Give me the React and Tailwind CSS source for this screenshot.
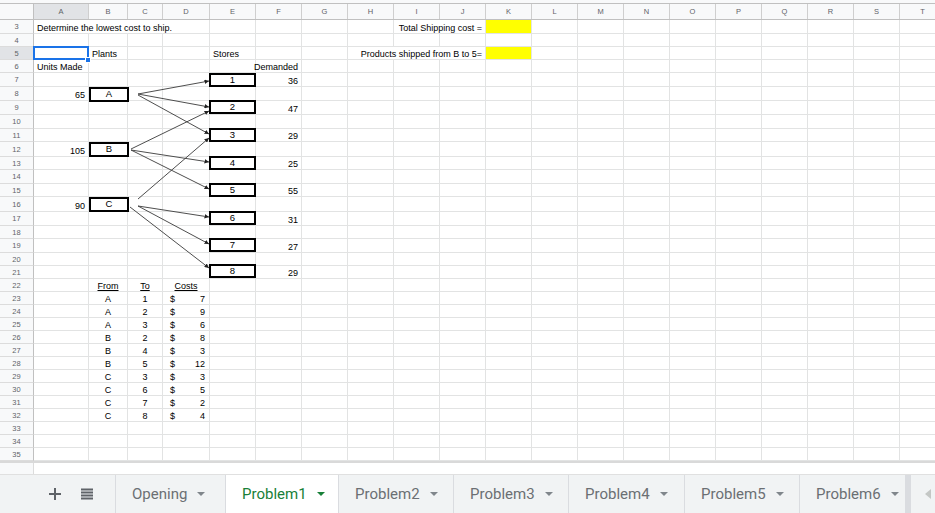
const COLS = [
  ['A', 55], ['B', 39], ['C', 35], ['D', 47], ['E', 46], ['F', 46], ['G', 46], ['H', 46],
  ['I', 46], ['J', 46], ['K', 46], ['L', 46], ['M', 46], ['N', 46], ['O', 46], ['P', 46],
  ['Q', 46], ['R', 46], ['S', 46], ['T', 46],
]

const W = { 55: 'w-[55px]', 39: 'w-[39px]', 35: 'w-[35px]', 47: 'w-[47px]', 46: 'w-[46px]' }
const H = { 13: 'h-[13px]', 14: 'h-[14px]', 15: 'h-[15px]' }

// row number -> height in px (sheet is zoomed out)
const ROWS = [
  [3, 14], [4, 13], [5, 13], [6, 13], [7, 14], [8, 14], [9, 14], [10, 14], [11, 13],
  [12, 15], [13, 13], [14, 14], [15, 13], [16, 15], [17, 14], [18, 13], [19, 14],
  [20, 13], [21, 13], [22, 13], [23, 13], [24, 13], [25, 13], [26, 13], [27, 13],
  [28, 13], [29, 13], [30, 13], [31, 13], [32, 13], [33, 13], [34, 13], [35, 13],
]

const COSTS = [
  ['A', 1, 7], ['A', 2, 9], ['A', 3, 6], ['B', 2, 8], ['B', 4, 3],
  ['B', 5, 12], ['C', 3, 3], ['C', 6, 5], ['C', 7, 2], ['C', 8, 4],
]

const CELLS = {
  A3: { text: 'Determine the lowest cost to ship.', noRight: true },
  B3: { noRight: true },
  C3: { noRight: true },
  I3: { noRight: true },
  J3: { text: 'Total Shipping cost =', align: 'right' },
  K3: { yellow: true },
  A5: { selected: true },
  B5: { text: 'Plants' },
  E5: { text: 'Stores' },
  H5: { noRight: true },
  I5: { noRight: true },
  J5: { text: 'Products shipped from B to 5=', align: 'right' },
  K5: { yellow: true },
  A6: { text: 'Units Made' },
  F6: { text: 'Demanded', align: 'right' },
  F7: { text: '36', align: 'right' },
  A8: { text: '65', align: 'right' },
  F9: { text: '47', align: 'right' },
  F11: { text: '29', align: 'right' },
  A12: { text: '105', align: 'right' },
  F13: { text: '25', align: 'right' },
  F15: { text: '55', align: 'right' },
  A16: { text: '90', align: 'right' },
  F17: { text: '31', align: 'right' },
  F19: { text: '27', align: 'right' },
  F21: { text: '29', align: 'right' },
  B22: { text: 'From', align: 'center', underline: true },
  C22: { text: 'To', align: 'center', underline: true },
  D22: { text: 'Costs', align: 'center', underline: true },
}
COSTS.forEach(([from, to, cost], i) => {
  const r = 23 + i
  CELLS['B' + r] = { text: from, align: 'center' }
  CELLS['C' + r] = { text: String(to), align: 'center' }
  CELLS['D' + r] = { money: cost }
})

const BOXES = [
  { label: 'A', cls: 'left-[89px] top-[87px] w-[40px] h-[15px]' },
  { label: 'B', cls: 'left-[89px] top-[142px] w-[40px] h-[15px]' },
  { label: 'C', cls: 'left-[89px] top-[197px] w-[40px] h-[15px]' },
  { label: '1', cls: 'left-[209px] top-[73px] w-[47px] h-[14px]' },
  { label: '2', cls: 'left-[209px] top-[100px] w-[47px] h-[14px]' },
  { label: '3', cls: 'left-[209px] top-[128px] w-[47px] h-[14px]' },
  { label: '4', cls: 'left-[209px] top-[156px] w-[47px] h-[14px]' },
  { label: '5', cls: 'left-[209px] top-[183px] w-[47px] h-[14px]' },
  { label: '6', cls: 'left-[209px] top-[211px] w-[47px] h-[14px]' },
  { label: '7', cls: 'left-[209px] top-[238px] w-[47px] h-[14px]' },
  { label: '8', cls: 'left-[209px] top-[264px] w-[47px] h-[14px]' },
]

const ARROWS = [
  [138, 94, 209, 81],
  [138, 94, 209, 107],
  [138, 95, 209, 134],
  [131, 149, 209, 111],
  [131, 150, 209, 162],
  [131, 150, 209, 189],
  [138, 199, 209, 138],
  [138, 206, 209, 217],
  [138, 206, 209, 244],
  [130, 207, 209, 268],
]

const TABS = [
  { name: 'Opening', w: 'w-[110px]' },
  { name: 'Problem1', w: 'w-[113px]', active: true },
  { name: 'Problem2', w: 'w-[115px]' },
  { name: 'Problem3', w: 'w-[115px]' },
  { name: 'Problem4', w: 'w-[116px]' },
  { name: 'Problem5', w: 'w-[115px]' },
  { name: 'Problem6', w: 'w-[115px]' },
]

function Cell({ id, w }) {
  const c = CELLS[id] || {}
  const align =
    c.align === 'right' ? 'justify-end' : c.align === 'center' ? 'justify-center' : 'justify-start'
  return (
    <div
      className={`${W[w]} relative flex h-full shrink-0 items-end border-b border-[#e2e3e3] px-[3px] ${align} ${
        c.noRight ? '' : 'border-r'
      } ${c.yellow ? 'bg-[#ffff00]' : ''}`}
    >
      {c.text && (
        <span className={`whitespace-nowrap leading-[9px] ${c.underline ? 'underline' : ''}`}>{c.text}</span>
      )}
      {c.money != null && (
        <span className="flex w-full justify-between pl-[4px] pr-[1px] leading-[9px]">
          <span>$</span>
          <span>{c.money}</span>
        </span>
      )}
      {c.selected && (
        <>
          <div className="absolute -top-px -left-px z-10 h-[14px] w-[56px] border-2 border-[#1a73e8]" />
          <div className="absolute -right-[3px] -bottom-[4px] z-10 h-[6px] w-[6px] border border-white bg-[#1a73e8]" />
        </>
      )}
    </div>
  )
}

function Caret({ color }) {
  return (
    <svg width="8" height="4" viewBox="0 0 8 4">
      <path d="M0 0h8L4 4z" fill={color} />
    </svg>
  )
}

export default function App() {
  return (
    <div className="relative h-[513px] w-[935px] overflow-hidden bg-white font-['Liberation_Sans',Arial,sans-serif] text-[9px] text-black">
      <div className="h-[3px] bg-[#f8f9fa]" />

      {/* column headers */}
      <div className="flex h-[17px] border-y border-[#c0c0c0] bg-[#f8f9fa] text-[7.5px] text-[#5f6368]">
        <div className="w-[34px] shrink-0 border-r border-[#c0c0c0]" />
        {COLS.map(([l, w]) => (
          <div
            key={l}
            className={`${W[w]} flex shrink-0 items-center justify-center border-r border-[#cfcfcf] ${
              l === 'A' ? 'bg-[#e1e3e6]' : ''
            }`}
          >
            {l}
          </div>
        ))}
      </div>

      {/* rows */}
      {ROWS.map(([r, h]) => (
        <div key={r} className={`flex ${H[h]}`}>
          <div
            className={`flex w-[34px] shrink-0 items-center justify-center border-r border-b border-[#c0c0c0] border-b-[#dcdcdc] pt-px text-[7.5px] text-[#5f6368] ${
              r === 5 ? 'bg-[#e1e3e6]' : 'bg-[#f8f9fa]'
            }`}
          >
            {r}
          </div>
          {COLS.map(([l, w]) => (
            <Cell key={l} id={l + r} w={w} />
          ))}
        </div>
      ))}

      <div className="h-[2px] bg-[#d9d9d9]" />
      <div className="flex h-[11px]">
        <div className="w-[34px] border-r border-[#dcdcdc] bg-[#f8f9fa]" />
        <div className="flex-1 bg-white" />
      </div>

      {/* sheet tabs */}
      <div className="flex h-[39px] border-t border-[#e0e0e0] bg-[#f1f3f4] font-['Roboto',sans-serif] text-[15px] text-[#6b6f73]">
        <div className="flex w-[116px] shrink-0 items-center border-r border-[#dadce0] pl-[49px]">
          <svg width="12" height="12" viewBox="0 0 12 12" className="text-[#5f6368]">
            <path d="M5 0h2v5h5v2H7v5H5V7H0V5h5z" fill="currentColor" />
          </svg>
          <svg width="12" height="12" viewBox="0 0 12 12" className="ml-[20px] text-[#5f6368]">
            <path d="M0 0.5h12v2H0zM0 3.5h12v2H0zM0 6.5h12v2H0zM0 9.5h12v2H0z" fill="currentColor" />
          </svg>
        </div>
        <div className="flex min-w-0 flex-1 overflow-hidden">
          {TABS.map((t) => (
            <div
              key={t.name}
              className={`${t.w} flex shrink-0 items-center gap-[10px] border-r border-[#dadce0] pl-[16px] ${
                t.active ? 'bg-white text-[#188038]' : ''
              }`}
            >
              <span>{t.name}</span>
              <Caret color={t.active ? '#188038' : '#80868b'} />
            </div>
          ))}
        </div>
        <div className="flex w-[30px] shrink-0 items-center border-l-[6px] border-[#dadce0] pl-[14px]">
          <svg width="6" height="10" viewBox="0 0 6 10">
            <path d="M6 0v10L0 5z" fill="#c4c7c5" />
          </svg>
        </div>
      </div>

      {/* drawing layer */}
      <svg className="pointer-events-none absolute inset-0 z-20" width="935" height="513">
        <defs>
          <marker id="ah" viewBox="0 0 10 10" refX="10" refY="5" markerWidth="5" markerHeight="5" orient="auto">
            <path d="M0 0L10 5L0 10z" fill="#222" />
          </marker>
        </defs>
        {ARROWS.map(([x1, y1, x2, y2], i) => (
          <line key={i} x1={x1} y1={y1} x2={x2} y2={y2} stroke="#3a3a3a" strokeWidth="0.9" markerEnd="url(#ah)" />
        ))}
      </svg>
      {BOXES.map((b) => (
        <div
          key={b.label}
          className={`absolute z-30 flex items-center justify-center border-2 border-black bg-white text-[9.5px] ${b.cls}`}
        >
          {b.label}
        </div>
      ))}
    </div>
  )
}
